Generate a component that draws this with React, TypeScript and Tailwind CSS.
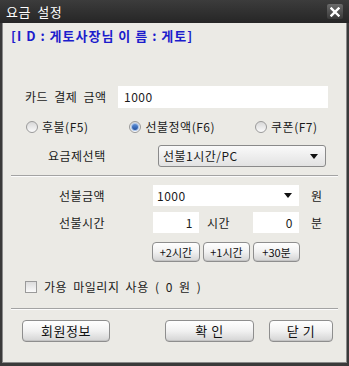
import React from "react";

const font = { fontFamily: '"Noto Sans CJK KR", "Noto Sans", sans-serif', wordSpacing: "3px" };

const Radio = ({ checked }: { checked?: boolean }) => (
  <span className="relative inline-flex h-[12px] w-[12px] items-center justify-center rounded-full border border-[#9a9a9a] bg-gradient-to-b from-[#d8d8d8] to-[#fbfbfb]">
    {checked && (
      <span className="h-[6px] w-[6px] rounded-full bg-gradient-to-b from-[#5d8fd8] to-[#1f4f9f] shadow-[0_0_0_1px_#a9c4ea]" />
    )}
  </span>
);

const Arrow = () => (
  <svg width="8" height="5" viewBox="0 0 8 5">
    <path d="M0 0 H8 L4 5 Z" fill="#111" />
  </svg>
);

const Btn = ({ label, className }: { label: string; className: string }) => (
  <button
    className={`flex items-center justify-center rounded-[4px] border border-[#8e8e8e] bg-gradient-to-b from-[#ffffff] via-[#f1f1f1] to-[#d4d4d4] text-[#111] shadow-[inset_0_-1px_0_#c4c4c4] ${className}`}
  >
    {label}
  </button>
);

export default function App() {
  return (
    <div style={font} className="flex h-[366px] w-[349px] flex-col bg-[#3a3a3a] text-[12px] tracking-[0.5px] text-[#1a1a1a]">
      {/* title bar */}
      <div className="flex h-[23px] items-center justify-between bg-gradient-to-b from-[#3c3c3c] to-[#262626] pl-[6px] pr-[6px]">
        <span className="text-[13px] leading-none text-white">요금 설정</span>
        <span className="flex h-[15px] w-[16px] items-center justify-center rounded-[2px] bg-gradient-to-b from-[#6a6a6a] to-[#3a3a3a]">
          <svg width="10" height="10" viewBox="0 0 10 10">
            <path d="M1.5 1.5 L8.5 8.5 M8.5 1.5 L1.5 8.5" stroke="#fff" strokeWidth="2.4" strokeLinecap="square" />
          </svg>
        </span>
      </div>

      {/* body */}
      <div className="mx-[2px] mb-[3px] flex flex-1 flex-col bg-[#ebeae5] border-x border-b border-[#8a8a8a]">
        <div className="flex h-[25px] items-center pl-[8px] text-[13px] font-bold tracking-[1px] text-[#1c1ccc] [word-spacing:0px]">
          [I D : 게토사장님 이 름 : 게토]
        </div>

        <div className="mt-[38px] flex h-[22px] items-center">
          <span className="w-[115px] pl-[22px]">카드 결제 금액</span>
          <div className="flex h-[22px] w-[210px] items-center bg-white pl-[6px]">1000</div>
        </div>

        <div className="mt-[8px] flex h-[22px] items-center">
          <span className="ml-[23px] flex items-center gap-[4px]">
            <Radio /> 후불(F5)
          </span>
          <span className="ml-[41px] flex items-center gap-[4px]">
            <Radio checked /> 선불정액(F6)
          </span>
          <span className="ml-[40px] flex items-center gap-[4px]">
            <Radio /> 쿠폰(F7)
          </span>
        </div>

        <div className="mt-[7px] flex h-[22px] items-center">
          <span className="w-[155px] pl-[45px]">요금제선택</span>
          <div className="flex h-[22px] w-[168px] items-center justify-between rounded-[3px] border border-[#8a8a8a] bg-gradient-to-b from-[#fafafa] to-[#e2e2e2] pl-[4px] pr-[7px]">
            <span>선불1시간/PC</span>
            <Arrow />
          </div>
        </div>

        <div className="mx-[8px] mt-[8px] h-[2px] border-t border-b border-t-[#a3a3a3] border-b-[#fbfbfb]" />

        <div className="mt-[8px] flex h-[21px] items-center">
          <span className="w-[150px] pl-[56px]">선불금액</span>
          <div className="flex h-[21px] w-[146px] items-center justify-between bg-white pl-[4px] pr-[7px]">
            <span>1000</span>
            <Arrow />
          </div>
          <span className="ml-[12px]">원</span>
        </div>

        <div className="mt-[6px] flex h-[21px] items-center">
          <span className="w-[150px] pl-[56px]">선불시간</span>
          <div className="flex h-[21px] w-[46px] items-center justify-end bg-white pr-[6px]">1</div>
          <span className="ml-[8px] w-[46px]">시간</span>
          <div className="flex h-[21px] w-[46px] items-center justify-end bg-white pr-[6px]">0</div>
          <span className="ml-[12px]">분</span>
        </div>

        <div className="mt-[9px] flex h-[20px] items-center gap-[3px] pl-[149px]">
          <Btn label="+2시간" className="h-[20px] w-[48px] text-[11px] tracking-normal" />
          <Btn label="+1시간" className="h-[20px] w-[47px] text-[11px] tracking-normal" />
          <Btn label="+30분" className="h-[20px] w-[47px] text-[11px] tracking-normal" />
        </div>

        <div className="mt-[16px] flex h-[18px] items-center pl-[22px]">
          <span className="h-[12px] w-[12px] border border-[#9a9a9a] bg-gradient-to-b from-[#dcdcdc] to-[#fafafa]" />
          <span className="ml-[7px]">가용 마일리지 사용 ( 0 원 )</span>
        </div>

        <div className="mx-[8px] mt-[12px] h-[2px] border-t border-b border-t-[#a3a3a3] border-b-[#fbfbfb]" />

        <div className="mt-[10px] flex h-[22px] items-center">
          <Btn label="회원정보" className="ml-[19px] h-[22px] w-[88px] text-[13px]" />
          <Btn label="확 인" className="ml-[55px] h-[22px] w-[89px] text-[13px]" />
          <Btn label="닫 기" className="ml-[15px] h-[22px] w-[64px] text-[13px]" />
        </div>
      </div>
    </div>
  );
}
